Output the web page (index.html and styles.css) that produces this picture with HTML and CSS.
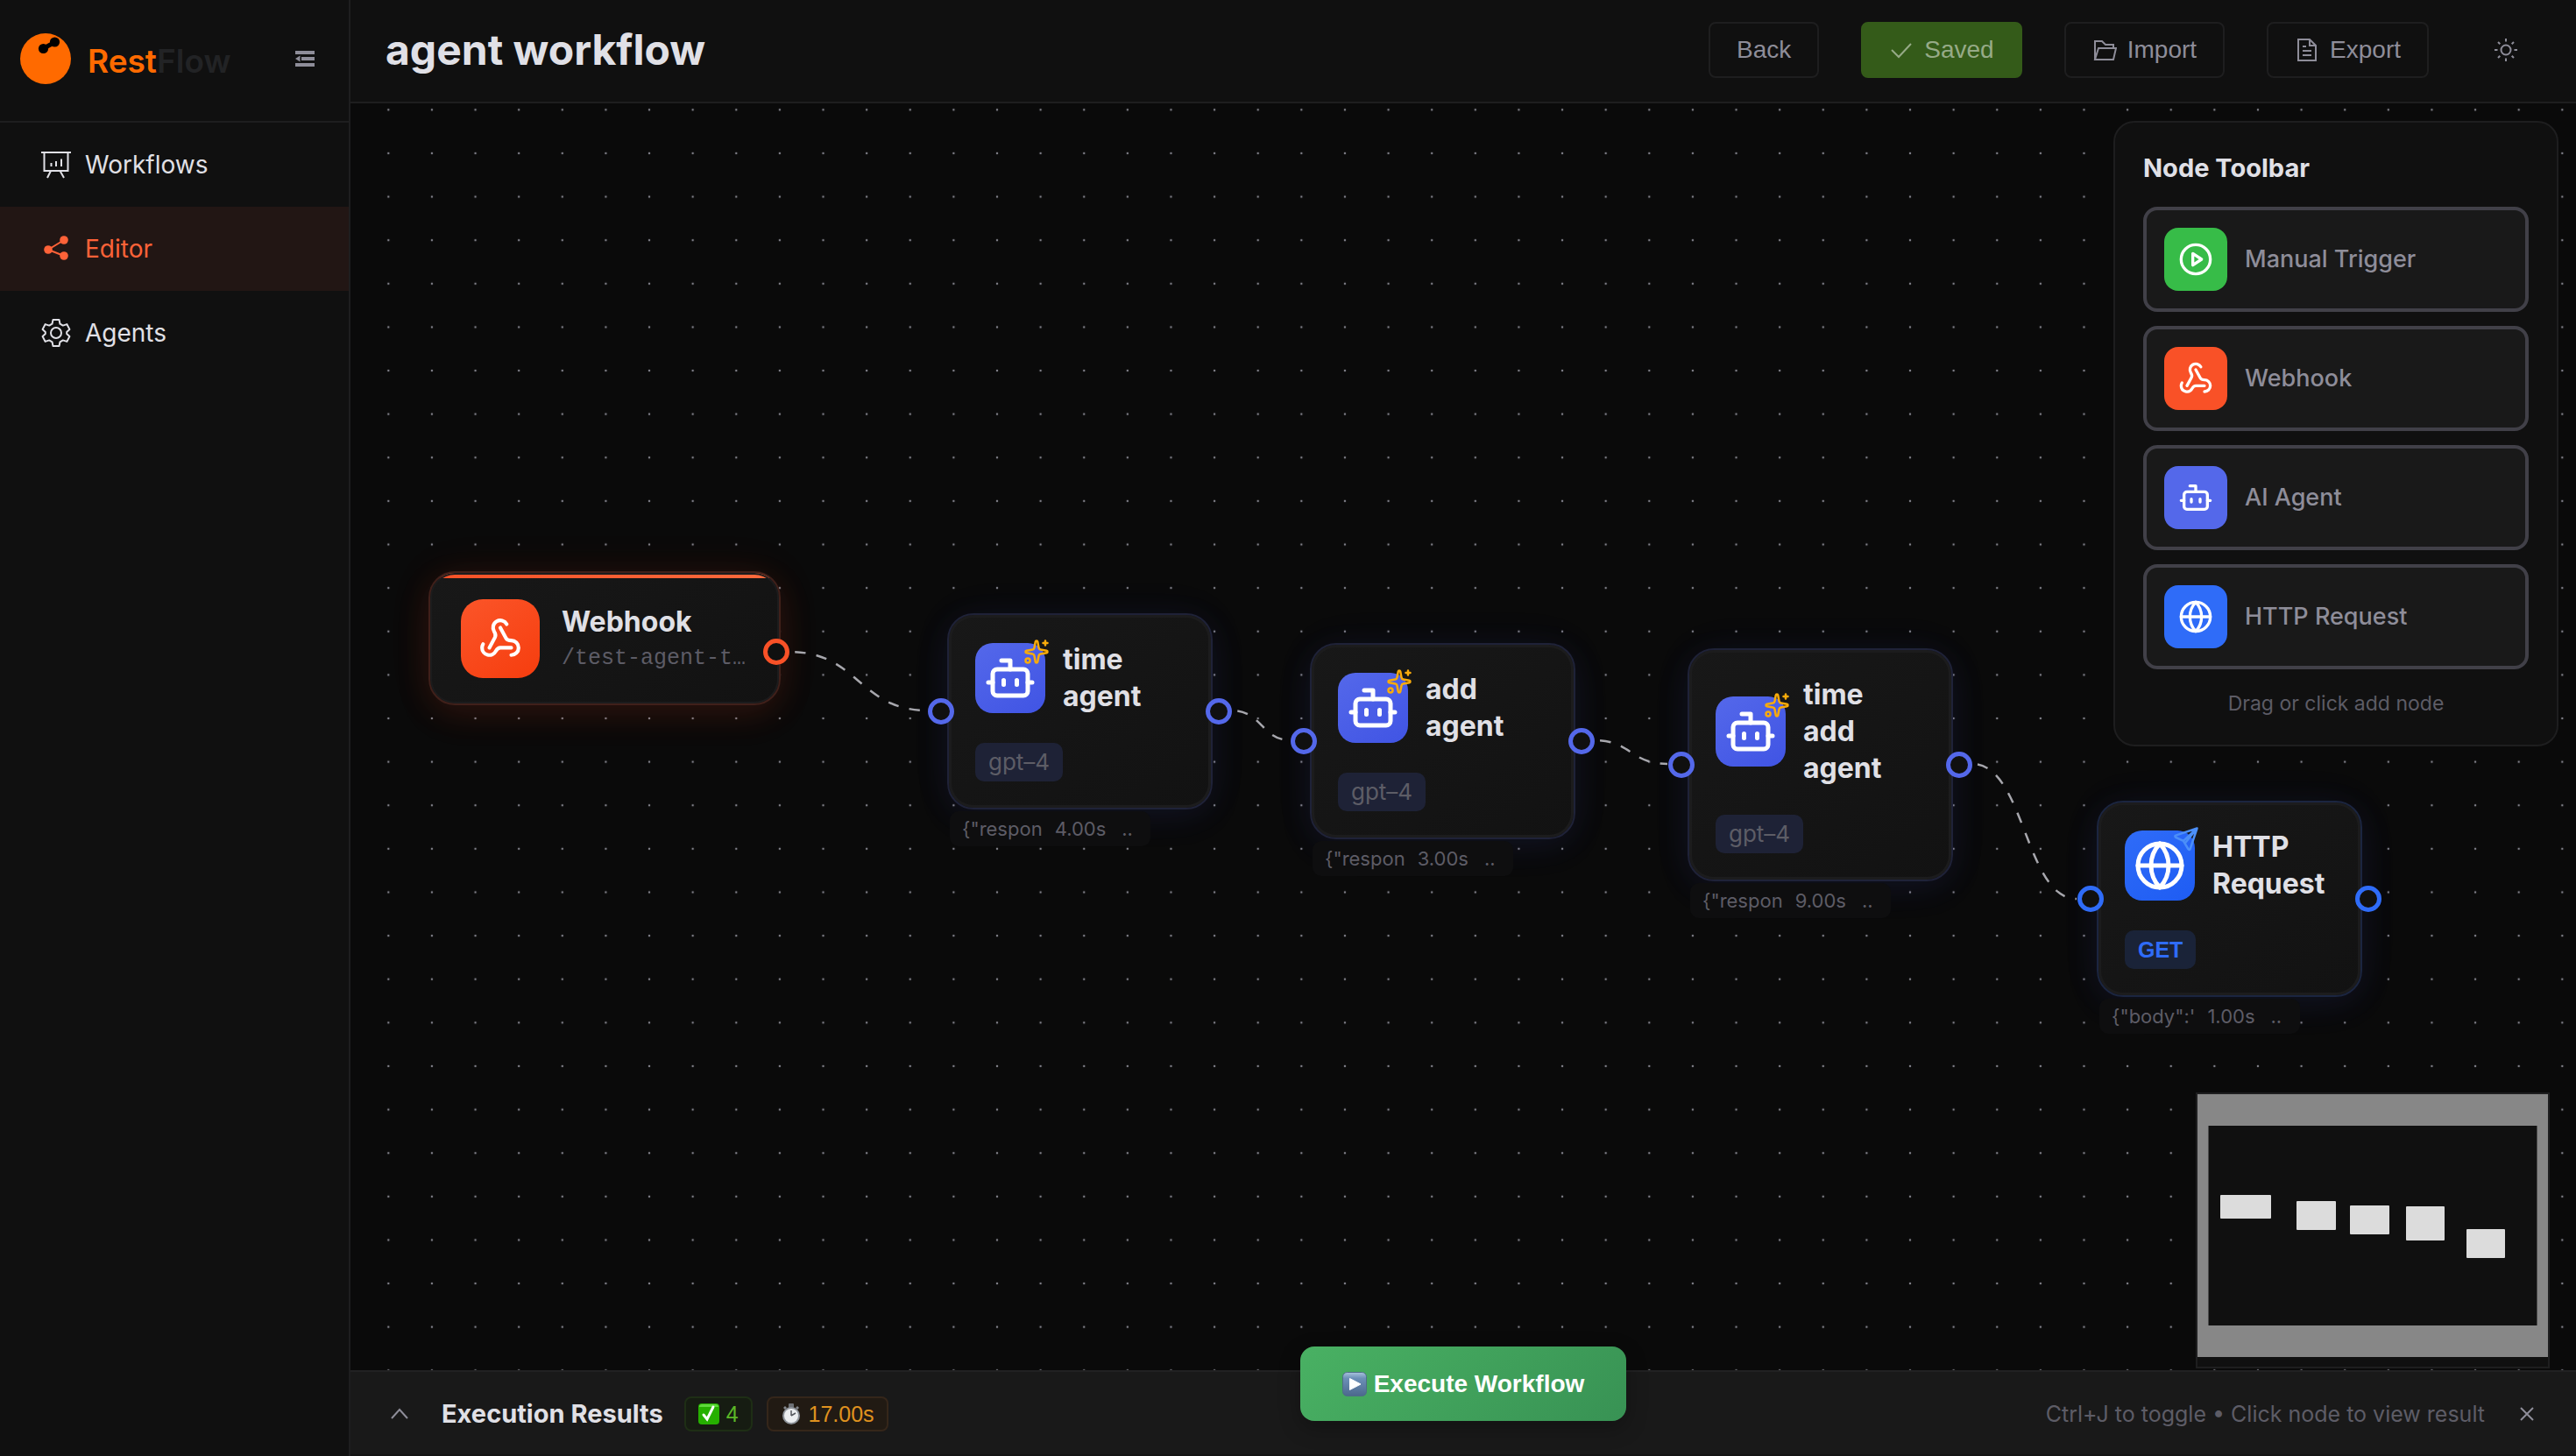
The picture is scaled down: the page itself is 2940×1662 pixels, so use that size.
FILE: index.html
```html
<!DOCTYPE html>
<html lang="en">
<head>
<meta charset="utf-8">
<title>RestFlow – agent workflow</title>
<link rel="stylesheet" href="styles.css">
</head>
<body>
<svg class="sprite" aria-hidden="true">
  <symbol id="i-webhook" viewBox="0 0 24 24"><path d="M18 16.98h-5.99c-1.1 0-1.95.94-2.48 1.9A4 4 0 0 1 2 17c.01-.7.2-1.4.57-2"/><path d="m6 17 3.13-5.78c.53-.97.1-2.18-.5-3.1a4 4 0 1 1 6.89-4.06"/><path d="m12 6 3.13 5.73C15.66 12.7 16.9 13 18 13a4 4 0 0 1 0 8"/></symbol>
  <symbol id="i-bot" viewBox="0 0 24 24"><path d="M12 8V4H8"/><rect width="16" height="12" x="4" y="8" rx="2"/><path d="M2 14h2M20 14h2M15 13v2M9 13v2"/></symbol>
  <symbol id="i-globe" viewBox="0 0 24 24"><circle cx="12" cy="12" r="10"/><path d="M12 2a14.5 14.5 0 0 0 0 20 14.5 14.5 0 0 0 0-20M2 12h20"/></symbol>
  <symbol id="i-play" viewBox="0 0 24 24"><circle cx="12" cy="12" r="10"/><path d="m10 8 6 4-6 4z"/></symbol>
  <symbol id="i-sparkles" viewBox="0 0 24 24"><path d="M11.017 2.814a1 1 0 0 1 1.966 0l1.051 5.558a2 2 0 0 0 1.594 1.594l5.558 1.051a1 1 0 0 1 0 1.966l-5.558 1.051a2 2 0 0 0-1.594 1.594l-1.051 5.558a1 1 0 0 1-1.966 0l-1.051-5.558a2 2 0 0 0-1.594-1.594l-5.558-1.051a1 1 0 0 1 0-1.966l5.558-1.051a2 2 0 0 0 1.594-1.594zM20 2v4M22 4h-4"/><circle cx="4" cy="20" r="2"/></symbol>
  <symbol id="i-plane" viewBox="0 0 24 24"><path d="M22 2 2.500 8.500c-.8.300-.8 1.300-.1 1.700L9.500 13.500 14 21c.4.800 1.500.700 1.700-.1zM22 2 9.500 13.500M22 2 11.500 15"/></symbol>
</svg>

<div class="app">
  <aside class="sidebar">
    <div class="brand">
      <svg class="brand-mark" viewBox="0 0 60 60" aria-hidden="true"><circle cx="30" cy="30" r="29" fill="#ff6a00"/><path d="M28 18 41 11" stroke="#000" stroke-width="5"/><circle cx="27.500" cy="18.500" r="5.600" fill="#000"/><circle cx="40.500" cy="11" r="5.600" fill="#000"/></svg>
      <span class="brand-name">Rest<span class="brand-dim">Flow</span></span>
      <button class="collapse" aria-label="Collapse menu"><svg viewBox="0 0 24 20" aria-hidden="true"><path d="M1 1h22v4H1zM8 8h15v4H8zM1 15h22v4H1zM1 10l5.500-3.500v7z"/></svg></button>
    </div>
    <nav class="menu">
      <a href="#workflows" class="menu-item"><svg viewBox="0 0 36 36" aria-hidden="true"><path d="M1 4h34M4.500 4v21h27V4M12 25l-4 8M22.500 25l4.500 8M12.500 16v4M18 14v6M24 11.500V20"/></svg>Workflows</a>
      <a href="#editor" class="menu-item active"><svg viewBox="0 0 36 36" aria-hidden="true"><path d="M27 8 9 19l18 7"/><g fill="currentColor" stroke="none"><circle cx="27" cy="8" r="4.800"/><circle cx="9" cy="19" r="4.800"/><circle cx="27" cy="26" r="4.800"/></g></svg>Editor</a>
      <a href="#agents" class="menu-item"><svg viewBox="0 0 36 36" aria-hidden="true"><circle cx="18" cy="18" r="6"/><path d="M14.500 3h7l1 4.700 3.300 1.900 4.600-1.500 3 5.900L30.200 17v2l3.200 3-3 5.900-4.600-1.500-3.300 1.900-1 4.700h-7l-1-4.700-3.300-1.900-4.600 1.500-3-5.900 3.200-3v-2l-3.200-3 3-5.900 4.600 1.500 3.300-1.900z" stroke-linejoin="round"/></svg>Agents</a>
    </nav>
  </aside>

  <main class="main">
    <header class="topbar">
      <h1>agent workflow</h1>
      <div class="actions">
        <button class="btn">Back</button>
        <button class="btn saved" disabled><svg viewBox="0 0 28 28" aria-hidden="true"><path d="m3 14 8 8L25 7"/></svg>Saved</button>
        <button class="btn"><svg viewBox="0 0 28 28" aria-hidden="true"><path d="M3 25V4h8l4 4h9v4M3 25 7 12h20l-3 13z"/></svg>Import</button>
        <button class="btn"><svg viewBox="0 0 28 28" aria-hidden="true"><path d="M4 2h13l7 7v17H4zM17 2v7h7M9 10h4M9 15h10M9 20h10"/></svg>Export</button>
        <button class="theme" aria-label="Toggle theme"><svg viewBox="0 0 28 28" aria-hidden="true"><circle cx="14" cy="14" r="5.500"/><path d="M14 1v3.500M14 23.500V27M1 14h3.500M23.500 14H27M5 5l2.300 2.300M20.700 20.700 23 23M5 23l2.300-2.300M20.700 7.300 23 5"/></svg></button>
      </div>
    </header>

    <section class="canvas">
      <svg class="layer" aria-hidden="true">
        <defs>
          <pattern id="dots" x="18.500" y="-17.500" width="49.620" height="49.620" patternUnits="userSpaceOnUse"><circle cx="24.810" cy="24.810" r="1.250" fill="#81818a"/></pattern>
        </defs>
        <rect width="100%" height="100%" fill="url(#dots)"/>
      </svg>

      <div class="node webhook">
        <span class="node-icon"><svg aria-hidden="true"><use href="#i-webhook"/></svg></span>
        <div class="node-text"><h2>Webhook</h2><p>/test-agent-t…</p></div>
        <i class="handle out"></i>
      </div>

      <div class="node agent a1">
        <div class="node-head"><span class="node-icon"><svg aria-hidden="true"><use href="#i-bot"/></svg><svg class="mini" aria-hidden="true"><use href="#i-sparkles"/></svg></span><h2>time agent</h2></div>
        <span class="tag">gpt–4</span>
        <i class="handle in"></i><i class="handle out"></i>
        <div class="result"><span>{"respon</span><span>4.00s</span><span class="more">..</span></div>
      </div>

      <div class="node agent a2">
        <div class="node-head"><span class="node-icon"><svg aria-hidden="true"><use href="#i-bot"/></svg><svg class="mini" aria-hidden="true"><use href="#i-sparkles"/></svg></span><h2>add agent</h2></div>
        <span class="tag">gpt–4</span>
        <i class="handle in"></i><i class="handle out"></i>
        <div class="result"><span>{"respon</span><span>3.00s</span><span class="more">..</span></div>
      </div>

      <div class="node agent a3">
        <div class="node-head"><span class="node-icon"><svg aria-hidden="true"><use href="#i-bot"/></svg><svg class="mini" aria-hidden="true"><use href="#i-sparkles"/></svg></span><h2>time<br>add<br>agent</h2></div>
        <span class="tag">gpt–4</span>
        <i class="handle in"></i><i class="handle out"></i>
        <div class="result"><span>{"respon</span><span>9.00s</span><span class="more">..</span></div>
      </div>

      <div class="node http">
        <div class="node-head"><span class="node-icon"><svg aria-hidden="true"><use href="#i-globe"/></svg><svg class="mini" aria-hidden="true"><use href="#i-plane"/></svg></span><h2>HTTP Request</h2></div>
        <span class="tag">GET</span>
        <i class="handle in"></i><i class="handle out"></i>
        <div class="result"><span>{"body":'</span><span>1.00s</span><span class="more">..</span></div>
      </div>

      <svg class="layer edges" aria-hidden="true">
        <path d="M501 626C580 626 580 693 659 693" stroke-dashoffset="-6"/>
        <path d="M1006 693C1040 693 1040 727 1073 727" stroke-dashoffset="-6"/>
        <path d="M1420 727C1461 727 1461 754 1503 754" stroke-dashoffset="-6"/>
        <path d="M1851 754C1911 754 1911 908 1970 908" stroke-dashoffset="-6"/>
      </svg>

      <section class="toolbar">
        <h2>Node Toolbar</h2>
        <div class="tools">
          <button class="tool green"><span><svg aria-hidden="true"><use href="#i-play"/></svg></span>Manual Trigger</button>
          <button class="tool red"><span><svg aria-hidden="true"><use href="#i-webhook"/></svg></span>Webhook</button>
          <button class="tool indigo"><span><svg aria-hidden="true"><use href="#i-bot"/></svg></span>AI Agent</button>
          <button class="tool blue"><span><svg aria-hidden="true"><use href="#i-globe"/></svg></span>HTTP Request</button>
        </div>
        <p>Drag or click add node</p>
      </section>

      <div class="minimap">
        <svg viewBox="0 0 400 300" aria-hidden="true">
          <path fill="#878787" fill-rule="evenodd" d="M0 0h400v300H0zM12.500 36h375v228h-375z"/>
          <g fill="#dcdcdc"><rect x="26" y="115" width="58" height="27" rx="1"/><rect x="113" y="122" width="45" height="33" rx="1"/><rect x="174" y="127" width="45" height="33" rx="1"/><rect x="238" y="128" width="44" height="39" rx="1"/><rect x="307" y="154" width="44" height="33" rx="1"/></g>
        </svg>
      </div>
    </section>

    <footer class="results">
      <button class="icon-btn" aria-label="Expand results"><svg viewBox="0 0 24 24" aria-hidden="true"><path d="m3 17 9-10 9 10"/></svg></button>
      <h2>Execution Results</h2>
      <span class="badge ok"><svg viewBox="0 0 24 24" aria-hidden="true"><rect width="24" height="24" rx="4" fill="#26b000"/><path d="M1 4q0-3 3-3h16q3 0 3 3z" fill="#5fd93c"/><path d="m6 13 4 5 7-14" fill="none" stroke="#fff" stroke-width="3" stroke-linecap="round"/></svg>4</span>
      <span class="badge time"><svg viewBox="0 0 24 24" aria-hidden="true"><rect x="9" y="0" width="6" height="5" rx="1" fill="#6d7075"/><path d="m3 5 2-2 2 2-2 2zM21 5l-2-2-2 2 2 2z" fill="#83878d"/><circle cx="12" cy="14" r="10" fill="#8f949b"/><circle cx="12" cy="14" r="8" fill="#eceef0"/><path d="M12 14V8M12 14l5-3" stroke="#55585d" stroke-width="1.500"/></svg>17.00s</span>
      <span class="hint">Ctrl+J to toggle • Click node to view result</span>
      <button class="icon-btn" aria-label="Close results"><svg viewBox="0 0 24 24" aria-hidden="true"><path d="m5 5 14 14M19 5 5 19"/></svg></button>
    </footer>

    <button class="execute"><svg viewBox="0 0 28 28" aria-hidden="true"><defs><linearGradient id="key" x2="0" y2="1"><stop stop-color="#a9c3dd"/><stop offset=".25" stop-color="#6d90b8"/><stop offset="1" stop-color="#4b688c"/></linearGradient></defs><rect x=".500" y=".500" width="27" height="27" rx="5" fill="url(#key)" stroke="#4f6d86"/><path d="M8.500 7.500v13L21 14z" fill="#fff" stroke="#fff" stroke-linejoin="round"/></svg>Execute Workflow</button>
  </main>
</div>
</body>
</html>
```
FILE: styles.css
```css
* { box-sizing: border-box; }

:root {
  --panel: #101010;
  --line: #1e1e1f;
  --text: #e0e0e6;
  --muted: #8e8d99;
  --faint: #5d5c66;
}

body {
  margin: 0;
  background: #0a0a0a;
  color: var(--text);
  font-family: Inter, "Liberation Sans", sans-serif;
  font-size: 28px;
  line-height: 40px;
}

h1, h2, p { margin: 0; font-weight: 700; }
button { font: inherit; color: inherit; background: none; border: 0; padding: 0; }
svg { display: block; fill: none; stroke: none; }
.sprite { position: absolute; width: 0; height: 0; }

.app { display: grid; grid-template-columns: 400px minmax(0, 1fr); min-height: 100vh; }

/* Sidebar */
.sidebar { background: var(--panel); border-right: 2px solid var(--line); }
.brand { display: flex; align-items: center; height: 140px; padding: 0 38px 4px 22px; border-bottom: 2px solid var(--line); }
.brand-mark { width: 60px; height: 60px; margin-right: 18px; }
.brand-name { flex: 1; padding-top: 6px; font-size: 37px; font-weight: 600; color: #ff6a00; }
.brand-dim { color: #222325; }
.collapse svg { width: 24px; height: 20px; fill: var(--muted); }
.menu-item { display: flex; align-items: center; gap: 15px; height: 96px; padding-left: 46px; color: var(--text); text-decoration: none; }
.menu-item svg { width: 36px; height: 36px; stroke: currentColor; stroke-width: 2; }
.menu-item.active { background: #221614; color: #ff6238; }

/* Top bar */
.main { position: relative; display: flex; flex-direction: column; min-width: 0; }
.topbar { display: flex; align-items: center; justify-content: space-between; height: 118px; padding: 0 40px 2px; background: var(--panel); border-bottom: 2px solid var(--line); }
.topbar h1 { font-size: 48px; line-height: 60px; }
.actions { display: flex; align-items: center; gap: 48px; color: var(--muted); font-family: "Liberation Sans", Arial, sans-serif; }
.btn { display: flex; align-items: center; gap: 12px; height: 64px; padding: 0 30px; border: 2px solid var(--line); border-radius: 8px; }
.btn svg, .theme svg { width: 28px; height: 28px; stroke: currentColor; stroke-width: 2; }
.btn.saved { background: #345b19; border-color: #345b19; color: #96aa87; }
.theme { padding: 18px; margin-right: 8px; margin-left: 8px; }

/* Flow canvas */
.canvas { position: relative; flex: 1; overflow: hidden; }
.layer { position: absolute; inset: 0; width: 100%; height: 100%; }
.edges { stroke: #a7a7ad; stroke-width: 2.500px; stroke-dasharray: 12.400 12.400; pointer-events: none; }

.node {
  --accent: #5468ea;
  position: absolute;
  width: 303px;
  padding: 30px;
  border-radius: 30px;
  background: linear-gradient(145deg, #181818, #121212);
  border: 2px solid #1f2238;
  box-shadow: inset 0 0 0 3px #1c1c1d, 0 10px 40px #5468ea14, 0 0 50px #5468ea0d;
}
.node h2 { font-size: 32px; line-height: 42px; }
.node.webhook {
  --accent: #f95127;
  left: 89px; top: 534px;
  display: flex; align-items: center; gap: 25px;
  width: 402px; height: 153px; padding: 0 36px 0 35px;
  border-color: #40201a;
  background: linear-gradient(100deg, #f95127, #ff6a3d) top / 100% 6px no-repeat, linear-gradient(145deg, #181818, #121212);
  box-shadow: inset 0 0 0 2px #1c1c1d, 0 12px 40px #f951271a, 0 0 50px #f9512714;
}
.node.a1 { left: 681px; top: 582px; }
.node.a2 { left: 1095px; top: 616px; }
.node.a3 { left: 1526px; top: 622px; }
.node.http { --accent: #2f6cf8; left: 1993px; top: 796px; border-color: #1b2540; }
.node-head { display: flex; align-items: center; gap: 20px; }
.node-icon { position: relative; display: grid; place-items: center; flex: none; width: 80px; height: 80px; border-radius: 20px; background: linear-gradient(145deg, #5468ea, #4054e4); }
.node-icon svg { width: 60px; height: 60px; stroke: #fff; stroke-width: 2; stroke-linecap: round; stroke-linejoin: round; }
.http .node-icon { background: linear-gradient(145deg, #2f6cf8, #1e5cf3); }
.webhook .node-icon { width: 90px; height: 90px; border-radius: 25px; background: linear-gradient(145deg, #fb5529, #f63d0e); }
.webhook .node-icon svg { width: 50px; height: 50px; }
.node-icon svg.mini { position: absolute; top: -5px; right: -5px; width: 30px; height: 30px; stroke: #f9ab0b; }
.http .node-icon svg.mini { stroke: #4c8ff8; }
.node-text { min-width: 0; padding-top: 4px; }
.node-text p { font: 25px/42px "Liberation Mono", monospace; color: var(--faint); white-space: nowrap; }
.tag { display: inline-block; margin-top: 32px; padding: 0 15px; border-radius: 10px; background: #1e2236; color: #5d5d66; font-size: 26px; line-height: 44px; vertical-align: top; }
.http .tag { background: #1a2338; color: #2f6cf8; font-family: "Liberation Sans", sans-serif; font-size: 25px; font-weight: 600; }
.handle { position: absolute; top: 50%; width: 30px; height: 30px; margin-top: -15px; border: 5px solid var(--accent); border-radius: 50%; background: #101010; }
.handle.in { left: -24px; }
.handle.out { right: -24px; }
.webhook .handle.out { right: -12px; margin-top: 0; }
.result { position: absolute; top: 100%; left: 1px; display: flex; gap: 14px; width: 229px; margin-top: 4px; padding: 0 14px; border-radius: 10px; background: #0e0e0f; color: var(--faint); font-size: 22px; line-height: 40px; }
.more { margin-left: 4px; }

/* Node toolbar */
.toolbar { position: absolute; top: 20px; right: 20px; width: 508px; padding: 32px; background: var(--panel); border: 2px solid var(--line); border-radius: 24px; }
.toolbar h2 { font-size: 29px; margin-bottom: 24px; }
.tools { display: grid; gap: 16px; }
.tool { display: flex; align-items: center; gap: 20px; height: 120px; padding: 20px; border: 4px solid #414048; border-radius: 16px; background: #191919; color: var(--muted); font-size: 27px; font-weight: 500; }
.tool span { display: grid; place-items: center; width: 72px; height: 72px; border-radius: 16px; }
.tool svg { width: 40px; height: 40px; stroke: #fff; stroke-width: 2; stroke-linecap: round; stroke-linejoin: round; }
.green span { background: #37bc48; }
.red span { background: #f95127; }
.indigo span { background: #5468ea; }
.blue span { background: #2f6cf8; }
.toolbar p { margin-top: 24px; color: var(--faint); font-size: 23px; line-height: 30px; font-weight: 400; text-align: center; }

/* Minimap */
.minimap { position: absolute; right: 30px; bottom: 2px; width: 404px; height: 315px; background: #101010; border: 2px solid var(--line); }
.minimap svg { width: 100%; }

/* Execution results */
.results { display: flex; align-items: center; height: 98px; padding: 2px 40px 0; background: #191919; border-top: 2px solid #212122; border-bottom: 2px solid #141414; }
.results h2 { margin: 0 24px 0 32px; font-size: 29px; }
.icon-btn { padding: 4px; }
.icon-btn svg { width: 24px; height: 24px; stroke: var(--muted); stroke-width: 2; }
.badge { display: flex; align-items: center; gap: 8px; height: 40px; margin-right: 16px; padding: 0 14px; border: 2px solid; border-radius: 8px; font-family: "Liberation Sans", sans-serif; font-size: 25px; }
.badge svg { width: 24px; height: 24px; }
.badge.ok { color: #5cb827; background: #161c12; border-color: #1e2e15; }
.badge.time { color: #e0921f; background: #211a13; border-color: #35261a; }
.hint { margin-left: auto; margin-right: 32px; color: var(--faint); font-size: 25px; }

.execute { position: absolute; left: 50%; bottom: 40px; transform: translateX(-50%); display: flex; align-items: center; justify-content: center; gap: 8px; width: 372px; height: 85px; border-radius: 16px; background: linear-gradient(135deg, #49b163, #389254); color: #fff; box-shadow: 0 8px 24px #0004; font-family: "Liberation Sans", Arial, sans-serif; font-weight: 700; }
.execute svg { width: 28px; height: 28px; }
```
